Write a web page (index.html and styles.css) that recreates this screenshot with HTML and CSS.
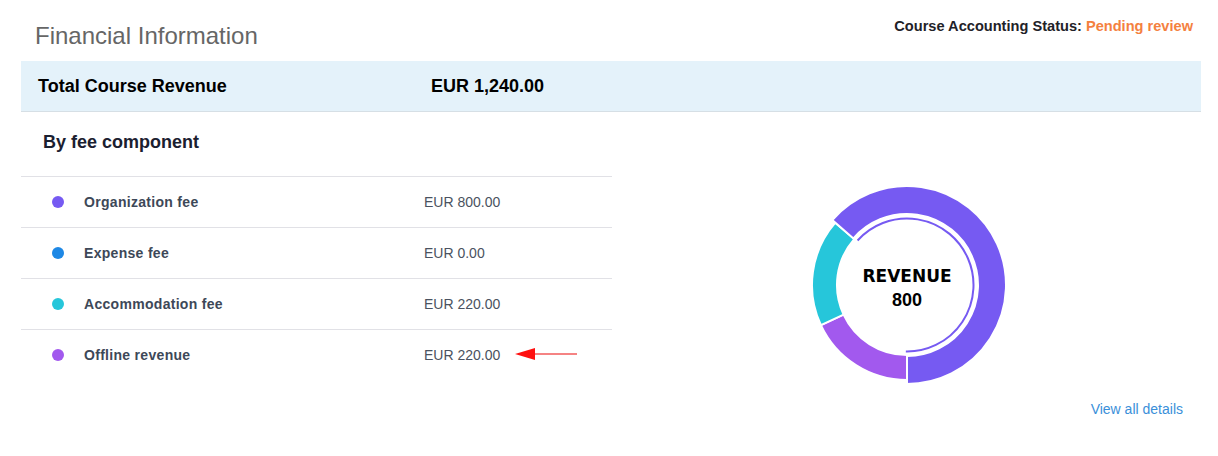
FILE: index.html
```html
<!DOCTYPE html>
<html lang="en">
<head>
<meta charset="utf-8">
<title>Financial Information</title>
<link rel="stylesheet" href="styles.css">
</head>
<body>
<div class="page">
  <header class="header">
    <h1 class="title">Financial Information</h1>
    <div class="status">Course Accounting Status: <span class="status-value">Pending review</span></div>
  </header>

  <div class="total-band">
    <span class="total-label">Total Course Revenue</span>
    <span class="total-value">EUR 1,240.00</span>
  </div>

  <div class="columns">
    <section class="breakdown">
      <h2 class="section-title">By fee component</h2>
      <ul class="fee-list">
        <li class="fee-row">
          <span class="dot dot-org"></span>
          <span class="fee-name">Organization fee</span>
          <span class="fee-amount">EUR 800.00</span>
        </li>
        <li class="fee-row">
          <span class="dot dot-expense"></span>
          <span class="fee-name">Expense fee</span>
          <span class="fee-amount">EUR 0.00</span>
        </li>
        <li class="fee-row">
          <span class="dot dot-accom"></span>
          <span class="fee-name">Accommodation fee</span>
          <span class="fee-amount">EUR 220.00</span>
        </li>
        <li class="fee-row">
          <span class="dot dot-offline"></span>
          <span class="fee-name">Offline revenue</span>
          <span class="fee-amount">EUR 220.00</span>
          <svg class="arrow" width="64" height="14" viewBox="0 0 64 14" aria-hidden="true">
            <line x1="18" y1="7" x2="62" y2="7" stroke="#f25a5a" stroke-width="1.6"/>
            <polygon points="0,7 20,1 20,13" fill="#ff1010"/>
          </svg>
        </li>
      </ul>
    </section>

    <section class="chart-col">
      <div class="chart-wrap">
        <svg class="donut" width="200" height="200" viewBox="0 0 200 200">
          <path d="M100 195 A95 95 0 0 1 13.90 140.15 L36.56 129.58 A70 70 0 0 0 100 170 Z" fill="#a259ee" stroke="#fff" stroke-width="2"/>
          <path d="M13.90 140.15 A95 95 0 0 1 28.30 37.67 L47.17 54.07 A70 70 0 0 0 36.56 129.58 Z" fill="#26c6da" stroke="#fff" stroke-width="2"/>
          <path d="M25.28 35.05 A99 99 0 1 1 100 199 L100 171 A71 71 0 1 0 46.42 53.42 Z" fill="#765af2" stroke="#fff" stroke-width="2"/>
          <path d="M50.58 55.50 A66.5 66.5 0 1 1 98.84 166.49" fill="none" stroke="#765af2" stroke-width="2"/>
          <text class="donut-label" x="100" y="96.5" text-anchor="middle">REVENUE</text>
          <text class="donut-value" x="100" y="121" text-anchor="middle">800</text>
        </svg>
      </div>
      <div class="details-row">
        <a class="details-link" href="#">View all details</a>
      </div>
    </section>
  </div>
</div>
</body>
</html>
```

FILE: styles.css
```css
html, body {
  margin: 0;
  padding: 0;
  background: #ffffff;
}

body {
  font-family: "Liberation Sans", Arial, sans-serif;
  color: #222;
  font-variant-ligatures: none;
}

.page {
  width: 1180px;
  padding: 0 17px 0 21px;
}

.header {
  display: flex;
  justify-content: space-between;
  align-items: flex-start;
  height: 61px;
}

.title {
  margin: 22px 0 0 14px;
  font-size: 24px;
  line-height: 28px;
  font-weight: normal;
  color: #666666;
}

.status {
  margin: 18px 8px 0 0;
  font-size: 14.6px;
  line-height: 17px;
  font-weight: bold;
  color: #1f2228;
}

.status-value {
  color: #f4813f;
}

.total-band {
  display: flex;
  align-items: center;
  height: 50px;
  background: #e4f2fa;
  border-bottom: 1px solid #d6dfe5;
  font-size: 18px;
  font-weight: bold;
  color: #000;
}

.total-label {
  width: 393px;
  padding-left: 17px;
}

.columns {
  display: grid;
  grid-template-columns: 591px 1fr;
}

.section-title {
  margin: 0;
  padding: 19px 0 23px 22px;
  font-size: 18px;
  line-height: 22px;
  font-weight: bold;
  color: #1b2030;
}

.fee-list {
  list-style: none;
  margin: 0;
  padding: 0;
}

.fee-row {
  display: flex;
  align-items: center;
  height: 50px;
  border-top: 1px solid #e1e1e6;
  font-size: 14px;
}

.dot {
  width: 12px;
  height: 12px;
  border-radius: 50%;
  margin-left: 31px;
  margin-right: 20px;
  flex: none;
}

.dot-org { background: #765af2; }
.dot-expense { background: #1e88e5; }
.dot-accom { background: #26c6da; }
.dot-offline { background: #a259ee; }

.fee-name {
  width: 340px;
  font-weight: bold;
  letter-spacing: 0.3px;
  color: #3d4858;
}

.fee-amount {
  color: #4a5260;
}

.arrow {
  margin-left: 15px;
  margin-top: -3px;
}

.chart-col {
  display: flex;
  flex-direction: column;
}

.chart-wrap {
  display: flex;
  justify-content: center;
  padding-top: 73px;
}

.donut {
  display: block;
}

.donut-label {
  font-family: "DejaVu Sans", sans-serif;
  font-weight: bold;
  font-size: 17px;
  fill: #000;
}

.donut-value {
  font-family: "Liberation Sans", Arial, sans-serif;
  font-weight: bold;
  font-size: 18px;
  fill: #000;
}

.details-row {
  display: flex;
  justify-content: flex-end;
  padding: 16px 18px 0 0;
}

.details-link {
  font-size: 14px;
  line-height: 17px;
  color: #3a8fd9;
  text-decoration: none;
}
```
